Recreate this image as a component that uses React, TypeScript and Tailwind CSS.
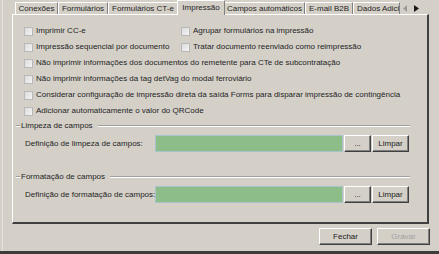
import React from "react";

const tabs = [
  { label: "Conexões", w: 43 },
  { label: "Formulários", w: 50 },
  { label: "Formulários CT-e", w: 70 },
  { label: "Impressão", w: 48, active: true },
  { label: "Campos automáticos", w: 81 },
  { label: "E-mail B2B", w: 48 },
  { label: "Dados Adicionais", w: 47, clip: true },
];

const Check = ({ label }: { label: string }) => (
  <div className="flex items-center h-[16px]">
    <span className="w-[9px] h-[9px] border border-[#b8b8b8] bg-gradient-to-br from-[#dcdcdc] to-[#f4f4f4] shrink-0" />
    <span className="ml-[3px] whitespace-nowrap">{label}</span>
  </div>
);

const Btn = ({ children, w, disabled }: { children: React.ReactNode; w: string; disabled?: boolean }) => (
  <div
    className={`${w} h-[17px] flex items-center justify-center border border-t-white border-l-white border-r-[#404040] border-b-[#404040] shadow-[inset_-1px_-1px_0_#808080] ${
      disabled ? "text-[#a0a0a0]" : "text-[#1a1a1a]"
    }`}
  >
    {children}
  </div>
);

const Group = ({ title, label }: { title: string; label: string }) => (
  <div className="mt-[1px]">
    <div className="flex items-center h-[12px] ml-[3px] w-[394px]">
      <span className="w-[4px] h-[2px] border-t border-t-[#a0a0a0] border-b border-b-white" />
      <span className="px-[1px] whitespace-nowrap">{title}</span>
      <span className="flex-1 h-[2px] border-t border-t-[#a0a0a0] border-b border-b-white ml-[4px]" />
    </div>
    <div className="flex items-center h-[17px] mt-[3px] ml-[12px]">
      <span className="w-[130px] whitespace-nowrap">{label}</span>
      <div className="w-[188px] h-[17px] bg-[#8dbd88] border border-[#a9c3cc]" />
      <Btn w="w-[27px] ml-[1px]">...</Btn>
      <Btn w="w-[37px] ml-[1px]">Limpar</Btn>
    </div>
  </div>
);

export default function App() {
  return (
    <div className="w-[439px] h-[254px] bg-[#d4d0c8] overflow-hidden text-[8px] text-[#1e1e1e] relative" style={{ fontFamily: '"Liberation Sans", Arial, sans-serif' }}>
      <div className="absolute left-[2px] top-0 bottom-0 w-px bg-[#e6e3de]" />
      <div className="flex flex-col">
        <div className="flex items-end h-[14px] pl-[15px] relative z-10">
          {tabs.map((t) => (
            <div
              key={t.label}
              style={{ width: t.w }}
              className={`flex items-center overflow-hidden whitespace-nowrap border-l border-l-white border-t border-t-white border-r border-r-[#808080] ${
                t.clip ? "justify-start" : "justify-center"
              } ${t.active ? "h-[15px] -mb-px bg-[#d4d0c8] -mx-[1px] relative z-10" : "h-[12px] bg-[#d4d0c8]"}`}
            >
              <span className="px-[3px]">{t.label}</span>
            </div>
          ))}
          <div className="flex items-center gap-[6px] h-[12px] ml-[3px]">
            <svg width="5" height="7" viewBox="0 0 5 7"><path d="M4 0 L0 3.5 L4 7 Z" fill="#9a9a9a" /></svg>
            <svg width="5" height="7" viewBox="0 0 5 7"><path d="M0 0 L5 3.5 L0 7 Z" fill="#1a1a1a" /></svg>
          </div>
        </div>
        <div className="ml-[12px] w-[417px] h-[210px] border-l border-t border-l-white border-t-white border-r-2 border-b-2 border-r-[#404040] border-b-[#404040] pt-[8px]">
          <div className="flex pl-[11px]">
            <div className="w-[157px]">
              <Check label="Imprimir CC-e" />
              <Check label="Impressão sequencial por documento" />
            </div>
            <div>
              <Check label="Agrupar formulários na impressão" />
              <Check label="Tratar documento reenviado como reimpressão" />
            </div>
          </div>
          <div className="pl-[11px]">
            <Check label="Não imprimir informações dos documentos do remetente para CTe de subcontratação" />
            <Check label="Não imprimir informações da tag detVag do modal ferroviário" />
            <Check label="Considerar configuração de impressão direta da saída Forms para disparar impressão de contingência" />
            <Check label="Adicionar automaticamente o valor do QRCode" />
          </div>
          <Group title="Limpeza de campos" label="Definição de limpeza de campos:" />
          <div className="h-[18px]" />
          <Group title="Formatação de campos" label="Definição de formatação de campos:" />
        </div>
        <div className="flex justify-end gap-[5px] mt-[4px] pr-[9px]">
          <Btn w="w-[53px]">Fechar</Btn>
          <Btn w="w-[53px]" disabled>Gravar</Btn>
        </div>
      </div>
      <div className="absolute left-0 right-0 bottom-0 h-[3px] bg-[#3c3c3c]" />
    </div>
  );
}
